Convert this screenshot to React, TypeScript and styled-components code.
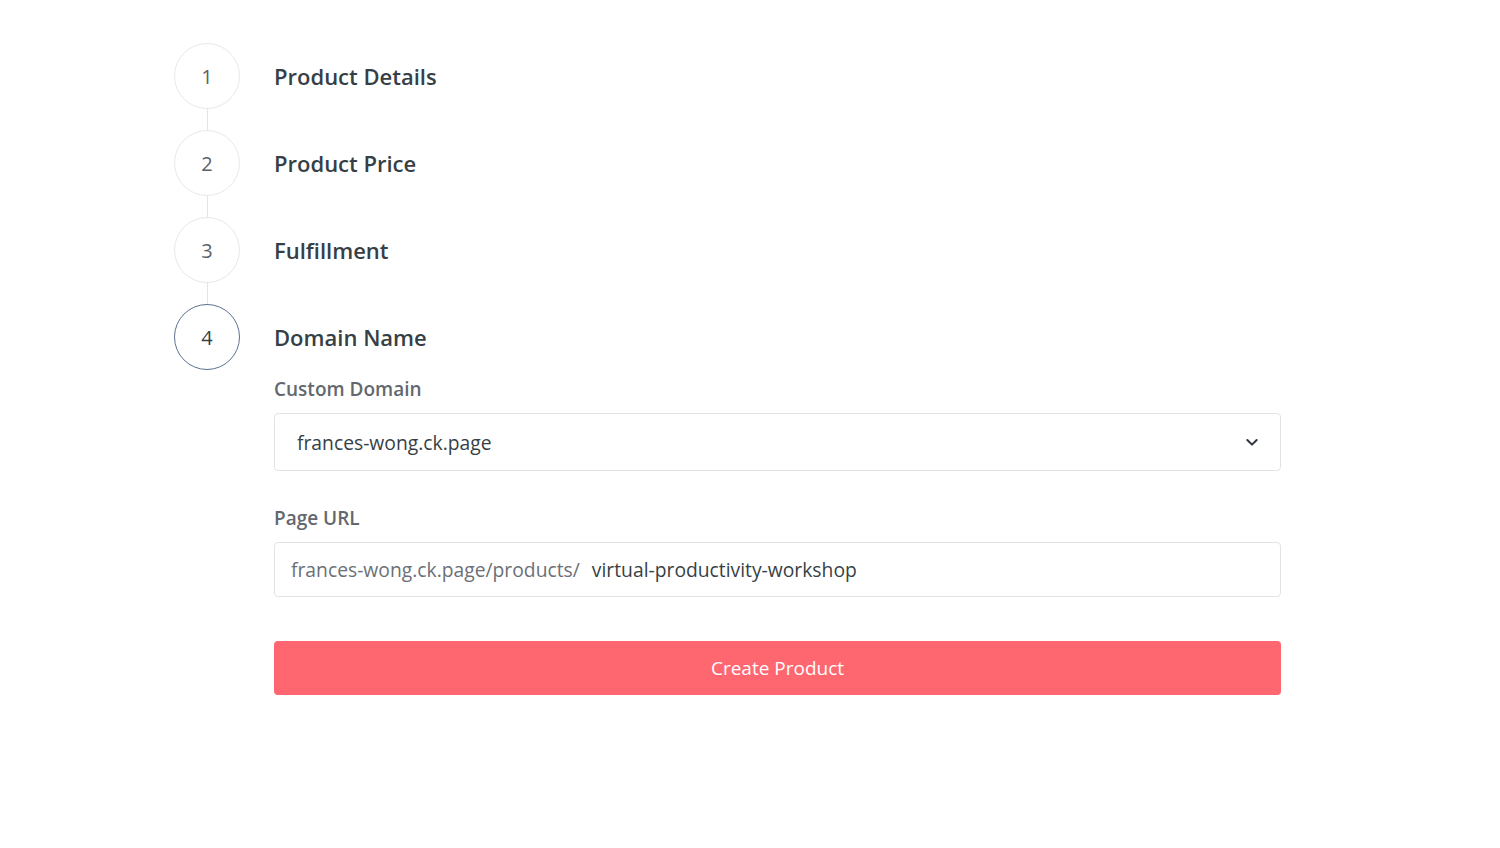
import React from 'react';
import styled, { createGlobalStyle } from 'styled-components';

const GlobalStyle = createGlobalStyle`
  html, body {
    margin: 0;
    padding: 0;
    background: #ffffff;
  }
  body {
    font-family: 'Open Sans', 'Noto Sans', sans-serif;
    color: #373f46;
  }
`;

const Page = styled.main`
  padding: 43px 0 0 174px;
  width: 1107px;
`;

const Steps = styled.ol`
  list-style: none;
  margin: 0;
  padding: 0;
  display: flex;
  flex-direction: column;
`;

const Step = styled.li`
  display: grid;
  grid-template-columns: 66px 1fr;
  column-gap: 34px;
`;

const Indicator = styled.div`
  display: flex;
  flex-direction: column;
  align-items: center;
`;

const Circle = styled.div<{ $active?: boolean }>`
  width: 66px;
  height: 66px;
  box-sizing: border-box;
  border-radius: 50%;
  border: 1px solid ${p => (p.$active ? '#5d7190' : '#e8e8e8')};
  display: flex;
  align-items: center;
  justify-content: center;
  font-size: 20px;
  color: ${p => (p.$active ? '#373f46' : '#5b6168')};
  flex-shrink: 0;
`;

const Connector = styled.div`
  width: 1px;
  flex: 1;
  min-height: 21px;
  background: #e4e4e4;
`;

const Body = styled.div`
  display: flex;
  flex-direction: column;
`;

const Title = styled.h2`
  margin: 0;
  height: 66px;
  display: flex;
  align-items: center;
  font-size: 22px;
  font-weight: 600;
  color: #373f46;
`;

const Form = styled.form`
  display: flex;
  flex-direction: column;
  padding-top: 7px;
`;

const Label = styled.label<{ $spaced?: boolean }>`
  font-size: 19px;
  line-height: 24px;
  font-weight: 600;
  color: #62686e;
  margin-top: ${p => (p.$spaced ? '35px' : '0')};
  margin-bottom: 12px;
`;

const SelectBox = styled.div`
  height: 58px;
  box-sizing: border-box;
  border: 1px solid #e3e3e3;
  border-radius: 4px;
  padding: 0 20px 0 22px;
  display: flex;
  align-items: center;
  justify-content: space-between;
  font-size: 19.3px;
  color: #373f46;
`;

const UrlField = styled.div`
  height: 55px;
  box-sizing: border-box;
  border: 1px solid #e3e3e3;
  border-radius: 4px;
  padding: 0 16px;
  display: flex;
  align-items: center;
  font-size: 19.3px;
`;

const Prefix = styled.span`
  color: #6b7076;
  margin-right: 12px;
`;

const Slug = styled.span`
  color: #373f46;
`;

const SubmitButton = styled.button`
  margin-top: 44px;
  height: 54px;
  border: none;
  border-radius: 4px;
  background: #fe6670;
  color: #ffffff;
  font-family: inherit;
  font-size: 19px;
  cursor: pointer;
`;

const Chevron = () => (
  <svg width="16" height="16" viewBox="0 0 24 24" fill="none" stroke="#2f353b" strokeWidth="3" strokeLinecap="round" strokeLinejoin="round">
    <path d="M5 9l7 7 7-7" />
  </svg>
);

const steps = ['Product Details', 'Product Price', 'Fulfillment', 'Domain Name'];

export default function App() {
  return (
    <>
      <GlobalStyle />
      <Page>
        <Steps>
          {steps.map((title, i) => {
            const last = i === steps.length - 1;
            return (
              <Step key={title}>
                <Indicator>
                  <Circle $active={last}>{i + 1}</Circle>
                  {!last && <Connector />}
                </Indicator>
                <Body>
                  <Title>{title}</Title>
                  {last && (
                    <Form onSubmit={e => e.preventDefault()}>
                      <Label>Custom Domain</Label>
                      <SelectBox>
                        <span>frances-wong.ck.page</span>
                        <Chevron />
                      </SelectBox>
                      <Label $spaced>Page URL</Label>
                      <UrlField>
                        <Prefix>frances-wong.ck.page/products/</Prefix>
                        <Slug>virtual-productivity-workshop</Slug>
                      </UrlField>
                      <SubmitButton type="submit">Create Product</SubmitButton>
                    </Form>
                  )}
                </Body>
              </Step>
            );
          })}
        </Steps>
      </Page>
    </>
  );
}
